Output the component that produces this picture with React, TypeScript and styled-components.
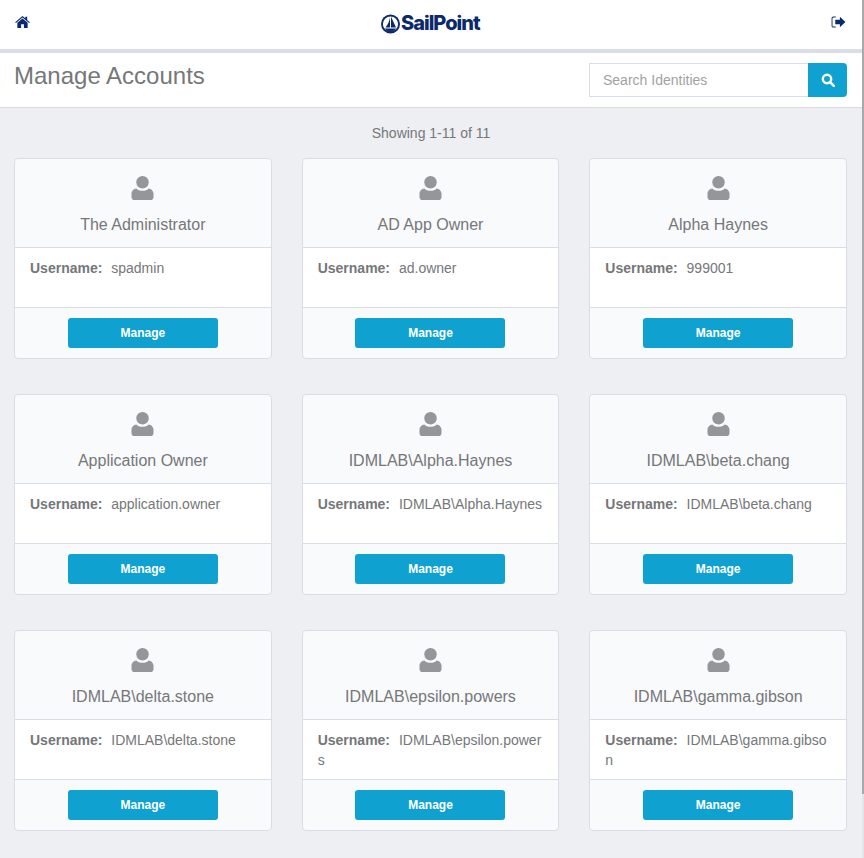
import React from 'react';
import styled, { createGlobalStyle } from 'styled-components';

const GlobalStyle = createGlobalStyle`
  html, body {
    margin: 0;
    padding: 0;
    height: 858px;
    overflow: hidden;
    background: #eeeff3;
    font-family: "Liberation Sans", Arial, sans-serif;
  }
`;

const Shell = styled.div`
  display: flex;
  width: 864px;
  height: 858px;
  overflow: hidden;
`;

const Page = styled.div`
  width: 862px;
  flex: none;
`;

const ScrollTrack = styled.div`
  width: 2px;
  height: 858px;
  background: #e4e5e6;
`;

const ScrollThumb = styled.div`
  height: 794px;
  background: #a9a9a9;
`;

const TopBar = styled.header`
  height: 49px;
  box-sizing: content-box;
  display: flex;
  align-items: flex-start;
  justify-content: space-between;
  padding: 0;
  background: #fff;
  border-bottom: 4px solid #d9dde6;
  position: relative;
`;

const IconSlot = styled.div<{ $left?: boolean }>`
  padding: ${(p) => (p.$left ? '15px 0 0 15px' : '16px 16px 0 0')};
  line-height: 0;
`;

const Logo = styled.div`
  position: absolute;
  left: 381px;
  top: 13px;
  display: flex;
  align-items: center;
  gap: 1px;
  color: #0b2a6b;
  font-family: Inter, "Liberation Sans", sans-serif;
  font-size: 20px;
  font-weight: 800;
  letter-spacing: -1px;
  line-height: 21px;
`;

const TitleBar = styled.div`
  height: 55px;
  box-sizing: border-box;
  background: #fff;
  border-bottom: 1px solid #d9dadd;
  display: flex;
  justify-content: space-between;
  padding: 10px 15px 0 14px;
`;

const Title = styled.h1`
  margin: 0;
  font-size: 24px;
  font-weight: 400;
  line-height: 26px;
  color: #757779;
`;

const Search = styled.div`
  display: flex;
  width: 258px;
  height: 34px;
`;

const SearchInput = styled.div`
  flex: 1;
  box-sizing: border-box;
  border: 1px solid #d9dde6;
  border-right: none;
  padding: 0 13px;
  font-size: 14px;
  line-height: 32px;
  color: #a2a2a2;
  background: #fff;
`;

const SearchButton = styled.div`
  width: 39px;
  background: #0fa2d0;
  border-radius: 0 4px 4px 0;
  display: flex;
  align-items: center;
  justify-content: center;
`;

const Showing = styled.div`
  text-align: center;
  font-size: 14px;
  line-height: 16px;
  color: #757779;
  padding-top: 17px;
  height: 50px;
  box-sizing: border-box;
`;

const Grid = styled.div`
  display: grid;
  grid-template-columns: repeat(3, 257.67px);
  column-gap: 30px;
  row-gap: 35px;
  padding: 0 15px 0 14px;
`;

const Card = styled.div`
  height: 201px;
  box-sizing: border-box;
  border: 1px solid #d9dde6;
  border-radius: 4px;
  background: #f9fafc;
  display: flex;
  flex-direction: column;
  overflow: hidden;
`;

const CardHead = styled.div`
  height: 89px;
  box-sizing: border-box;
  border-bottom: 1px solid #d9dde6;
  display: flex;
  flex-direction: column;
  align-items: center;
  padding-top: 17px;
`;

const Name = styled.div`
  margin-top: 16px;
  font-size: 16px;
  line-height: 18px;
  color: #757779;
`;

const CardBody = styled.div`
  height: 60px;
  box-sizing: border-box;
  background: #fff;
  border-bottom: 1px solid #d9dde6;
  padding: 10px 15px 0;
  font-size: 14px;
  line-height: 20px;
  color: #757779;
  word-break: break-all;
`;

const Label = styled.b`
  margin-right: 5px;
`;

const CardFoot = styled.div`
  flex: 1;
  display: flex;
  justify-content: center;
  padding-top: 10px;
`;

const ManageButton = styled.div`
  width: 150px;
  height: 30px;
  border-radius: 3px;
  background: #0fa2d0;
  color: #fff;
  font-size: 12px;
  font-weight: 700;
  line-height: 30px;
  text-align: center;
`;

const HomeIcon = () => (
  <svg width="15" height="14" viewBox="0 0 16 14" fill="#0b2a6b">
    <path d="M8 0.5 L11 3 V1.5 H13 V4.8 L15.8 7.2 L15 8 L8 2.2 L1 8 L0.2 7.2 Z" />
    <path d="M8 3.3 L13.5 7.8 V13.5 H9.5 V9.5 H6.5 V13.5 H2.5 V7.8 Z" />
  </svg>
);

const LogoutIcon = () => (
  <svg width="15" height="12" viewBox="0 0 16 13" fill="#0b2a6b">
    <path d="M5 0.5 H2.5 C1.2 0.5 0.5 1.3 0.5 2.5 V10.5 C0.5 11.7 1.2 12.5 2.5 12.5 H5 V11.5 H2.5 C1.9 11.5 1.5 11.1 1.5 10.5 V2.5 C1.5 1.9 1.9 1.5 2.5 1.5 H5 Z" />
    <path d="M9.5 0.8 L15.5 6.5 L9.5 12.2 V9 H4.5 V4 H9.5 Z" />
  </svg>
);

const SearchIcon = () => (
  <svg width="14" height="14" viewBox="0 0 14 14" fill="none" stroke="#fff">
    <circle cx="6" cy="6" r="4.2" strokeWidth="2.4" />
    <path d="M9.2 9.2 L12.8 12.8" strokeWidth="2.4" strokeLinecap="round" />
  </svg>
);

const UserIcon = () => (
  <svg width="23" height="24" viewBox="0 0 24 25" fill="#949699">
    <circle cx="12" cy="6.5" r="6.5" />
    <path d="M0.5 21.5 V18.5 C0.5 15.5 3 13.3 5.5 13 C7 14.6 9.3 15.4 12 15.4 C14.7 15.4 17 14.6 18.5 13 C21 13.3 23.5 15.5 23.5 18.5 V21.5 C23.5 23.8 22.3 25 20.5 25 H3.5 C1.7 25 0.5 23.8 0.5 21.5 Z" />
  </svg>
);

const LogoMark = () => (
  <svg width="19" height="20" viewBox="0 0 19 20">
    <circle cx="9.5" cy="10" r="9.5" fill="#0b2a6b" />
    <circle cx="9.5" cy="10" r="7.6" fill="#fff" />
    <path d="M10 2.5 C11.5 6 13.5 10 15 13.5 H10 Z M9 3 V13.5 H4.5 C6.8 10.5 8.6 7 9 3 Z M3.8 14.5 H15.2 C13.8 16.6 11.8 18 9.5 18 C7.2 18 5.2 16.6 3.8 14.5 Z" fill="#0b2a6b" />
  </svg>
);

const accounts = [
  { name: 'The Administrator', username: 'spadmin' },
  { name: 'AD App Owner', username: 'ad.owner' },
  { name: 'Alpha Haynes', username: '999001' },
  { name: 'Application Owner', username: 'application.owner' },
  { name: 'IDMLAB\\Alpha.Haynes', username: 'IDMLAB\\Alpha.Haynes' },
  { name: 'IDMLAB\\beta.chang', username: 'IDMLAB\\beta.chang' },
  { name: 'IDMLAB\\delta.stone', username: 'IDMLAB\\delta.stone' },
  { name: 'IDMLAB\\epsilon.powers', username: 'IDMLAB\\epsilon.powers' },
  { name: 'IDMLAB\\gamma.gibson', username: 'IDMLAB\\gamma.gibson' },
];

export default function App() {
  return (
    <Shell>
      <GlobalStyle />
      <Page>
        <TopBar>
          <IconSlot $left>
            <HomeIcon />
          </IconSlot>
          <Logo>
            <LogoMark />
            <span>SailPoint</span>
          </Logo>
          <IconSlot>
            <LogoutIcon />
          </IconSlot>
        </TopBar>
        <TitleBar>
          <Title>Manage Accounts</Title>
          <Search>
            <SearchInput>Search Identities</SearchInput>
            <SearchButton>
              <SearchIcon />
            </SearchButton>
          </Search>
        </TitleBar>
        <Showing>Showing 1-11 of 11</Showing>
        <Grid>
          {accounts.map((a) => (
            <Card key={a.name}>
              <CardHead>
                <UserIcon />
                <Name>{a.name}</Name>
              </CardHead>
              <CardBody>
                <Label>Username:</Label> {a.username}
              </CardBody>
              <CardFoot>
                <ManageButton>Manage</ManageButton>
              </CardFoot>
            </Card>
          ))}
        </Grid>
      </Page>
      <ScrollTrack>
        <ScrollThumb />
      </ScrollTrack>
    </Shell>
  );
}
